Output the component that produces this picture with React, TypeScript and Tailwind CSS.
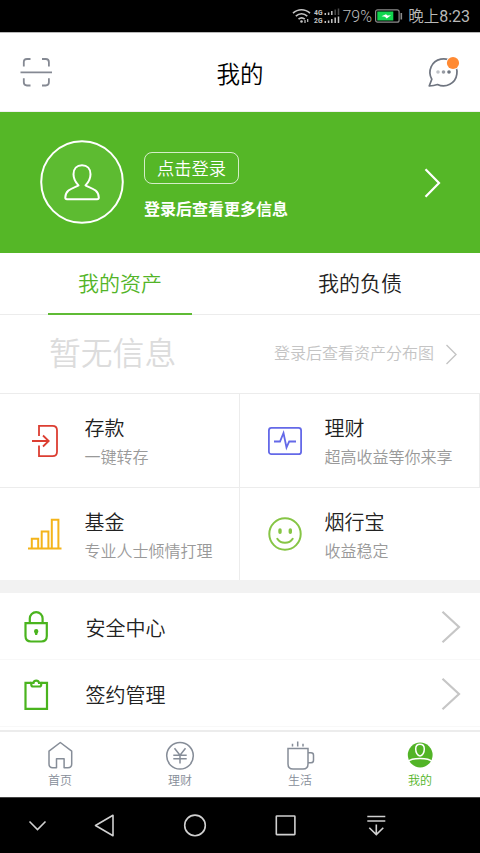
import type { ReactNode } from 'react'

type Product = {
  title: string
  desc: string
  icon: ReactNode
}

type MenuItem = {
  label: string
  icon: ReactNode
}

type NavItem = {
  label: string
  icon: ReactNode
  active?: boolean
}

const products: Product[] = [
  {
    title: '存款',
    desc: '一键转存',
    icon: (
      <svg width="36" height="36" viewBox="0 0 36 36" fill="none" stroke="#dc3e32" strokeWidth="1.8">
        <path d="M12 13V2.800h13.500q4.500 0 4.500 4.500v21.400q0 4.500-4.500 4.500H12V22.500" />
        <path d="M5 18h16.500M16 12.500l5.700 5.500-5.700 5.500" />
      </svg>
    ),
  },
  {
    title: '理财',
    desc: '超高收益等你来享',
    icon: (
      <svg width="36" height="36" viewBox="0 0 36 36" fill="none" stroke="#6469e8" strokeWidth="1.8">
        <rect x="1.900" y="4.900" width="32.200" height="26.300" rx="2.500" />
        <path d="M7 18.500h6l3.500-8.500 3 14.500 2.700-6H29" strokeWidth="1.800" />
      </svg>
    ),
  },
  {
    title: '基金',
    desc: '专业人士倾情打理',
    icon: (
      <svg width="36" height="36" viewBox="0 0 36 36" fill="none" stroke="#f4b41a" strokeWidth="2">
        <path d="M1 32.500h33.500M4.800 32V22.800h6.400v9.200M14.700 32V15.500h6.700V32M24.800 32V3.800h6.600V32" />
      </svg>
    ),
  },
  {
    title: '烟行宝',
    desc: '收益稳定',
    icon: (
      <svg width="36" height="36" viewBox="0 0 36 36" fill="none" stroke="#86c545" strokeWidth="2" strokeLinecap="round">
        <circle cx="18" cy="18" r="15.700" />
        <path d="M13 14v2.200M23.300 14v2.200" strokeWidth="3.400" />
        <path d="M10.300 22.800c3.500 5.400 11.900 5.400 15.400 0" />
      </svg>
    ),
  },
]

const menu: MenuItem[] = [
  {
    label: '安全中心',
    icon: (
      <svg width="26" height="34" viewBox="0 0 26 34" fill="none" stroke="#4ab41e" strokeWidth="2.200">
        <path d="M2.500 13.200h21.300v12.800q0 5.500-5.500 5.500H8q-5.500 0-5.500-5.500z" />
        <path d="M6.800 13.200V8.600a6.400 6.400 0 0 1 12.800 0v4.600" />
        <path d="M13.200 19a2.200 2.200 0 0 1 2.200 2.200c0 1.300-1.200 1.800-1.200 3.800h-2c0-2-1.200-2.500-1.200-3.800a2.200 2.200 0 0 1 2.200-2.200z" fill="#4ab41e" stroke="none" />
      </svg>
    ),
  },
  {
    label: '签约管理',
    icon: (
      <svg width="26" height="34" viewBox="0 0 26 34" fill="none" stroke="#4ab41e" strokeWidth="2.200">
        <path d="M8 5.800H2.500v26h21.500v-26H18.500" />
        <path d="M8.300 5.800h2.200a2.800 2.800 0 0 1 5.500 0h2.200v2q0 1.700-1.700 1.700H10q-1.700 0-1.700-1.700z" />
      </svg>
    ),
  },
]

const navItems: NavItem[] = [
  {
    label: '首页',
    icon: (
      <svg width="32" height="32" viewBox="0 0 32 32" fill="none" stroke="#868d98" strokeWidth="1.500">
        <path d="M16.300 3.500L5 12.200V25q0 3.700 3.700 3.700h3.800v-9h7.600v9H24q3.700 0 3.700-3.700V12.200z" strokeLinejoin="round" />
      </svg>
    ),
  },
  {
    label: '理财',
    icon: (
      <svg width="32" height="32" viewBox="0 0 32 32" fill="none" stroke="#868d98" strokeWidth="1.500">
        <circle cx="16" cy="16.800" r="13.300" />
        <path d="M10.500 9.200l5.500 7 5.500-7M16 16v8.500M9.300 16.300h13.400M9.300 19.800h13.400" />
      </svg>
    ),
  },
  {
    label: '生活',
    icon: (
      <svg width="32" height="32" viewBox="0 0 32 32" fill="none" stroke="#868d98" strokeWidth="1.500">
        <path d="M4 9.500h20V25q0 5-5 5H9q-5 0-5-5z" />
        <path d="M24 13.800h3q2.500 0 2.500 2.500v5q0 2.500-2.500 2.500h-3M8.500 4.800v2.700M13.700 2.500v5M19 4.800v2.700" />
      </svg>
    ),
  },
  {
    label: '我的',
    active: true,
    icon: (
      <svg width="32" height="32" viewBox="0 0 32 32" fill="none" stroke="#fff" strokeWidth="1.500">
        <circle cx="16.200" cy="16" r="12.400" fill="#52b427" stroke="none" />
        <path d="M16 5.300c-3 0-4.300 2-4.300 4.700 0 3.300 1.600 6.900 4.300 6.900s4.300-3.600 4.300-6.900c0-2.700-1.300-4.700-4.300-4.700z" />
        <path d="M3.500 22.800c4.500-4.300 20.500-4.300 25 0" />
      </svg>
    ),
  },
]

function StatusBar() {
  return (
    <div className="flex h-8 items-center justify-end bg-black pr-[10px] text-[#b9b9b9]">
      <svg width="80" height="32" viewBox="0 0 80 32" fill="none" stroke="#c4c4c4" className="mr-[3px]">
        <path d="M1 13.200c5-4.700 12-4.700 17 0M3.800 16.200c3.500-3.200 8-3.200 11.500 0M6.500 19.200c2-1.700 4.300-1.700 6.300 0" strokeWidth="1.600" />
        <circle cx="9.500" cy="21.500" r="1.300" fill="#c4c4c4" stroke="none" />
        <path d="M13 20v3M15.700 19v3" strokeWidth="1.200" />
        <text x="22" y="14.500" fontSize="7" fontWeight="700" fontFamily="Roboto" fill="#c4c4c4" stroke="none" textLength="8.500" lengthAdjust="spacingAndGlyphs">4G</text>
        <text x="22" y="23.300" fontSize="7" fontWeight="700" fontFamily="Roboto" fill="#c4c4c4" stroke="none" textLength="8.500" lengthAdjust="spacingAndGlyphs">2G</text>
        <path d="M33.300 13v2M36.600 12.500v2.500M39.800 11v4M33.300 21v2M36.600 20.500v2.500M39.800 19v4M43.200 17.500v5.500M46.500 16.500v6.500" strokeWidth="1.500" />
        <path d="M43.200 9.500V15M46.500 8.500V15" stroke="#4a4a4a" strokeWidth="1.500" />
        <text x="50.500" y="21.500" fontSize="16.500" fontFamily="Roboto" fill="#bdbdbd" stroke="none" textLength="29.500" lengthAdjust="spacingAndGlyphs">79%</text>
      </svg>
      <svg width="28" height="14" viewBox="0 0 28 14" className="mr-[5px]">
        <rect x="0.600" y="0.800" width="23.500" height="12.400" rx="2" fill="none" stroke="#8c8c8c" strokeWidth="1.200" />
        <rect x="2.300" y="2.500" width="16" height="9" fill="#12d64f" />
        <path d="M6.500 7.300L11 5.200l1.500 1.300 3.500-.2-4.300 3.200-1.700-1.700z" fill="#fff" />
        <path d="M26.300 4v6.500" stroke="#8c8c8c" strokeWidth="1.600" />
      </svg>
      <span className="text-[15.500px] leading-8 whitespace-nowrap">
        晚上<span className="font-['Roboto'] text-[16px] font-normal">8:23</span>
      </span>
    </div>
  )
}

function Header() {
  return (
    <header className="flex h-20 items-center justify-between border-t border-b border-t-[#b8b8b8] border-b-[#f0f0f0] px-5">
      <svg width="33" height="32" viewBox="0 0 33 32" fill="none" stroke="#858993" strokeWidth="1.800">
        <path d="M.500 16.300h31.500M3.800 10.500V6.200q0-3.200 3.200-3.200h3.500M22 3h3.700q3.200 0 3.200 3.200v4.300M3.800 22.300v4q0 3.200 3.200 3.200h3.500M22 29.500h3.700q3.200 0 3.200-3.200v-4" />
      </svg>
      <h1 className="pt-px text-[23.500px] leading-8 font-[350] text-black">我的</h1>
      <svg width="33" height="34" viewBox="0 0 33 34" fill="none">
        <path d="M2.200 31l2.600-6.800A13.500 13.500 0 1 1 10.500 29.500q-3.600 1.200-8.300 1.500z" stroke="#6f7580" strokeWidth="1.700" strokeLinejoin="round" />
        <circle cx="11" cy="17" r="1.800" fill="#bfc2c7" />
        <circle cx="16.500" cy="17" r="1.800" fill="#979ba3" />
        <circle cx="22" cy="17" r="1.800" fill="#6f7580" />
        <circle cx="26" cy="8" r="7" fill="#fff" />
        <circle cx="26" cy="8" r="6.100" fill="#ff8a33" />
      </svg>
    </header>
  )
}

function LoginBanner() {
  return (
    <section className="flex h-[141px] items-center bg-[#55b727] pr-[39px] pl-[40px] text-white">
      <svg width="84" height="84" viewBox="0 0 84 84" fill="#5dbb31" stroke="#fff" className="mb-[2px]">
        <circle cx="42" cy="42" r="40.800" strokeWidth="2" />
        <path
          d="M42 25.200c-5.300 0-8.500 3.500-8.500 9 0 4.800 2 8 5 11.200-4 2.500-13.200 3.600-13.200 12.200 0 1.100.500 1.600 1.600 1.600h30.300c1.100 0 1.600-.500 1.600-1.600 0-8.600-9.300-9.700-13.300-12.200 3-3.200 5-6.400 5-11.200 0-5.500-3.200-9-8.500-9z"
          strokeWidth="2"
          strokeLinejoin="round"
        />
      </svg>
      <div className="ml-5 flex flex-col items-start pt-[7px]">
        <button className="flex h-8 w-[95px] items-center justify-center rounded-lg border border-white/75 text-[17.300px] leading-none">点击登录</button>
        <p className="mt-3 text-[16px] leading-6 font-bold">登录后查看更多信息</p>
      </div>
      <svg width="18" height="32" viewBox="0 0 18 32" fill="none" stroke="#fff" strokeWidth="2.200" className="ml-auto">
        <path d="M2.500 2.300L16 16 2.500 29.700" />
      </svg>
    </section>
  )
}

function AssetTabs() {
  return (
    <div className="flex h-[62px] border-b border-[#ececec] text-[21px] text-[#222]">
      <button className="flex flex-1 justify-center">
        <span className="-mb-px flex h-[62px] w-36 items-center justify-center border-b-2 border-[#5fbb35] text-[#52b427]">我的资产</span>
      </button>
      <button className="flex-1 pb-[2px]">我的负债</button>
    </div>
  )
}

function MenuRow({ label, icon }: MenuItem) {
  return (
    <div className="flex h-[67px] items-center border-b border-[#f8f8f8] pt-[2px] pr-[19px] pl-[23px]">
      {icon}
      <span className="mt-px ml-[36.500px] text-[20px] text-[#222]">{label}</span>
      <svg width="20" height="34" viewBox="0 0 20 34" fill="none" stroke="#c6c6c6" strokeWidth="2.200" className="ml-auto">
        <path d="M1.500 1.700L18 17 1.500 32.300" />
      </svg>
    </div>
  )
}

function SystemBar() {
  return (
    <div className="flex h-14 items-center border-t border-[#444] bg-black">
      <svg width="480" height="55" viewBox="0 0 480 55" fill="none" stroke="#d0d0d0" strokeWidth="1.600">
        <path d="M29.500 23.500l8 8 8-8" />
        <path d="M113 17.300v20.500L95.500 27.500z" strokeLinejoin="round" />
        <circle cx="195" cy="27.400" r="10.300" />
        <rect x="276.300" y="18" width="18.600" height="18.600" rx="0.500" />
        <path d="M367.300 18.500h18M367.300 23h18M376.300 26.500v10M369.300 29.700l7 6.900 7-6.900" />
      </svg>
    </div>
  )
}

export default function App() {
  return (
    <div className="flex h-[853px] w-[480px] flex-col overflow-hidden bg-white font-['Noto_Sans_CJK_SC',sans-serif] font-[350]">
      <StatusBar />
      <Header />
      <LoginBanner />
      <AssetTabs />

      <div className="flex h-[78px] items-center justify-between pr-[23px] pb-[4px] pl-[49px]">
        <span className="text-[31.800px] leading-none text-[#dcdcdc]">暂无信息</span>
        <div className="flex items-center text-[16px] text-[#c4c4c4]">
          登录后查看资产分布图
          <svg width="12" height="22" viewBox="0 0 12 22" fill="none" stroke="#c4c4c4" strokeWidth="1.400" className="mt-[4px] ml-[11px]">
            <path d="M1.500 2L11 11.500 1.500 21" />
          </svg>
        </div>
      </div>

      <div className="grid h-[187px] grid-cols-2 grid-rows-[94px_92px] border-t border-[#ececec]">
        {products.map((item) => (
          <div key={item.title} className="flex items-center border-r border-b border-[#ececec] pl-[27px] nth-[n+3]:border-b-0 nth-[4]:border-r-0">
            {item.icon}
            <div className="ml-[21.500px] pt-[3px]">
              <div className="text-[20px] leading-7 text-[#222]">{item.title}</div>
              <div className="text-[16px] leading-7 text-[#999]">{item.desc}</div>
            </div>
          </div>
        ))}
      </div>

      <div className="h-[13px] bg-[#f2f2f2]" />

      <div className="h-[137px]">
        {menu.map((item) => (
          <MenuRow key={item.label} {...item} />
        ))}
      </div>

      <nav className="grid h-[67px] grid-cols-4 border-t-2 border-[#ececec]">
        {navItems.map((item) => (
          <div key={item.label} className="flex flex-col items-center pt-[7px]">
            {item.icon}
            <span className={item.active ? 'mt-px text-[12px] leading-4 text-[#52b427]' : 'mt-px text-[12px] leading-4 text-[#868d98]'}>{item.label}</span>
          </div>
        ))}
      </nav>

      <SystemBar />
    </div>
  )
}
